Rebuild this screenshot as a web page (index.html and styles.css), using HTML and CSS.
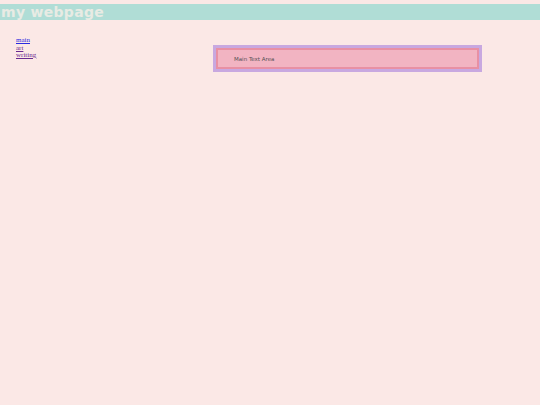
FILE: index.html
```html
<!DOCTYPE html>
<html>
<head>
<meta charset="utf-8">
<link rel="stylesheet" href="styles.css">
</head>
<body>
<div class="header">my webpage</div>
<div class="layout">
  <nav class="nav">
    <a href="#main" class="link">main</a>
    <a href="#art" class="link visited">art</a>
    <a href="#writing" class="link visited">writing</a>
  </nav>
  <div class="frame">
    <div class="content">Main Text Area</div>
  </div>
</div>
</body>
</html>
```
FILE: styles.css
```css
html, body {
  margin: 0;
  padding: 0;
  background: #fbe8e6;
  height: 100%;
}
body {
  padding-top: 4px;
  box-sizing: border-box;
}
.header {
  height: 16px;
  background: #b0ddd6;
  color: #e8ebe4;
  font-family: "DejaVu Sans", Verdana, sans-serif;
  font-weight: bold;
  font-size: 14px;
  letter-spacing: 0.3px;
  line-height: 17px;
  padding-left: 1px;
}
.layout {
  display: grid;
  grid-template-columns: 213px 269px;
  align-items: start;
  padding-top: 17px;
}
.nav {
  display: flex;
  flex-direction: column;
  padding-left: 16px;
  font-family: "Liberation Serif", "Times New Roman", serif;
  font-size: 7px;
  line-height: 7.5px;
}
.link {
  color: #2a2ae0;
}
.link.visited {
  color: #6a2a90;
}
.frame {
  margin-top: 8px;
  height: 27px;
  box-sizing: border-box;
  background: #c8a8e0;
  padding: 3px;
}
.content {
  height: 100%;
  box-sizing: border-box;
  background: #f2b4c2;
  border: 2px solid #e890a4;
  font-family: "DejaVu Sans", Verdana, sans-serif;
  font-size: 5.5px;
  color: #555055;
  padding-left: 16px;
  display: flex;
  align-items: center;
}
```
